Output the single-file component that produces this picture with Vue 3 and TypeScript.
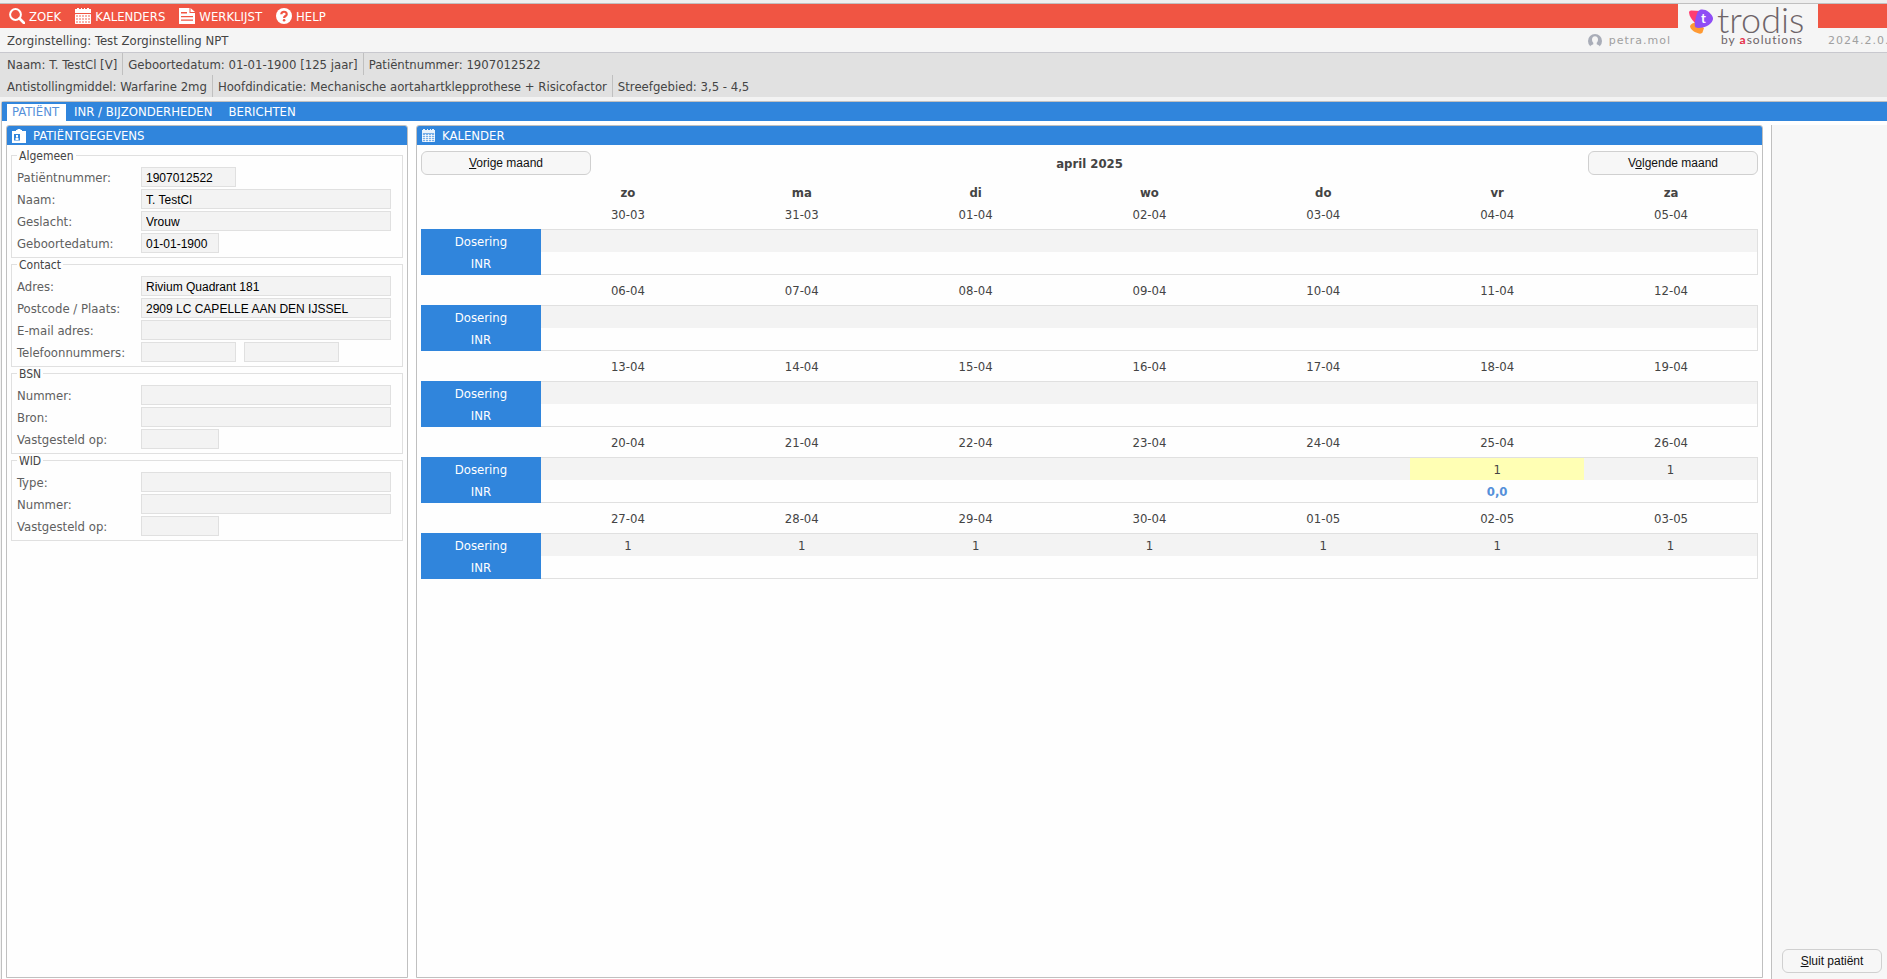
<script setup lang="ts">
interface Field { id: string; label: string; values: string[]; size: 'short' | 'medium' | 'full' }
interface Group { title: string; fields: Field[] }
interface Week { dates: string[]; doses: string[]; inr: string[]; today?: number }

const groups: Group[] = [
  {
    title: 'Algemeen',
    fields: [
      { id: 'nr', label: 'Patiëntnummer:', values: ['1907012522'], size: 'medium' },
      { id: 'naam', label: 'Naam:', values: ['T. TestCl'], size: 'full' },
      { id: 'geslacht', label: 'Geslacht:', values: ['Vrouw'], size: 'full' },
      { id: 'geboren', label: 'Geboortedatum:', values: ['01-01-1900'], size: 'short' },
    ],
  },
  {
    title: 'Contact',
    fields: [
      { id: 'adres', label: 'Adres:', values: ['Rivium Quadrant 181'], size: 'full' },
      { id: 'plaats', label: 'Postcode / Plaats:', values: ['2909 LC CAPELLE AAN DEN IJSSEL'], size: 'full' },
      { id: 'email', label: 'E-mail adres:', values: [''], size: 'full' },
      { id: 'telefoon', label: 'Telefoonnummers:', values: ['', ''], size: 'medium' },
    ],
  },
  {
    title: 'BSN',
    fields: [
      { id: 'bsn', label: 'Nummer:', values: [''], size: 'full' },
      { id: 'bron', label: 'Bron:', values: [''], size: 'full' },
      { id: 'bsn-datum', label: 'Vastgesteld op:', values: [''], size: 'short' },
    ],
  },
  {
    title: 'WID',
    fields: [
      { id: 'wid-type', label: 'Type:', values: [''], size: 'full' },
      { id: 'wid', label: 'Nummer:', values: [''], size: 'full' },
      { id: 'wid-datum', label: 'Vastgesteld op:', values: [''], size: 'short' },
    ],
  },
]

const days = ['zo', 'ma', 'di', 'wo', 'do', 'vr', 'za']
const none = ['', '', '', '', '', '', '']
const weeks: Week[] = [
  { dates: ['30-03', '31-03', '01-04', '02-04', '03-04', '04-04', '05-04'], doses: none, inr: none },
  { dates: ['06-04', '07-04', '08-04', '09-04', '10-04', '11-04', '12-04'], doses: none, inr: none },
  { dates: ['13-04', '14-04', '15-04', '16-04', '17-04', '18-04', '19-04'], doses: none, inr: none },
  {
    dates: ['20-04', '21-04', '22-04', '23-04', '24-04', '25-04', '26-04'],
    doses: ['', '', '', '', '', '1', '1'],
    inr: ['', '', '', '', '', '0,0', ''],
    today: 5,
  },
  {
    dates: ['27-04', '28-04', '29-04', '30-04', '01-05', '02-05', '03-05'],
    doses: ['1', '1', '1', '1', '1', '1', '1'],
    inr: none,
  },
]
</script>

<template>
  <div class="app">
    <header class="top">
      <nav class="menu">
        <a href="#">
          <svg width="16" height="16" viewBox="0 0 16 16"><circle cx="6.5" cy="6.5" r="5.4" fill="none" stroke="#fff" stroke-width="2" /><path d="M10.5 10.5L15 15" stroke="#fff" stroke-width="2.6" stroke-linecap="round" /></svg>
          <span>ZOEK</span>
        </a>
        <a href="#">
          <svg width="16" height="16" viewBox="0 0 16 16"><path fill="#fff" d="M0 1h2V0h2v1h2V0h1v1h2V0h1v1h2V0h2v1h2v4H0z" /><path fill="#fff" opacity=".55" d="M0 6h16v10H0z" /><path fill="none" stroke="#fff" d="M.5 6.500h15v9H.5zM0 9.500h16M0 12.500h16M3.500 6v10M6.500 6v10M9.500 6v10M12.500 6v10" /></svg>
          <span>KALENDERS</span>
        </a>
        <a href="#">
          <svg width="16" height="16" viewBox="0 0 16 16"><path fill="#fff" fill-rule="evenodd" d="M0 0h10.500v5H16v11H0zM2 4v1.500h6V4zM2 8v1.200h12V8zM2 11.500v1.200h12v-1.200z" /><path fill="#fff" d="M11.500 0L16 4h-4.500z" /></svg>
          <span>WERKLIJST</span>
        </a>
        <a href="#">
          <svg width="16" height="16" viewBox="0 0 16 16"><circle cx="8" cy="8" r="8" fill="#fff" /><path d="M5.300 6.200C5.300 2.900 10.700 3 10.700 6.200C10.700 8 8.100 8 8.100 9.900" fill="none" stroke="#f05543" stroke-width="2.200" /><circle cx="8.100" cy="12.200" r="1.300" fill="#f05543" /></svg>
          <span>HELP</span>
        </a>
      </nav>
      <div class="menu-end"></div>
      <div class="sub">
        <span>Zorginstelling: Test Zorginstelling NPT</span>
        <span class="user">
          <svg width="14" height="14" viewBox="0 0 14 14"><circle cx="7" cy="7" r="7" fill="#a9adb8" /><path fill="#f5f5f5" d="M7 2.200c2 0 3 1.500 3 3.300 0 1.500-.6 2.700-1.300 3.300v1.400c1.600.6 2.600 1.100 3.300 2L10 14H4l-2-1.800c.7-.9 1.700-1.400 3.300-2V8.800C4.600 8.200 4 7 4 5.500c0-1.800 1-3.300 3-3.300z" /></svg>
          <span>petra.mol</span>
        </span>
      </div>
      <div class="brand">
        <svg width="26" height="26" viewBox="0 0 26 26"><path fill="#ff3d71" d="M1 4.500C1 3.200 2 2.500 3.200 2.500L12 3 9 17C4 12 1.500 9 1 4.500z" /><path fill="#ff9a33" d="M2 18C4 14.500 8 14 10 16l6 4-1.500 4.500c-1 1.500-3 1.300-5 .6C6 24 2 21 2 18z" /><path fill="#8f4df5" d="M10 3.500C11.500 1 14.500 1 17.500 2c4 2 7.500 5.500 7.500 8.500 0 3-3 6.500-7 8-3 1.300-8.500 2-10.500.8C5.500 17.500 8 7 10 3.500z" /><text x="13" y="15" class="mark">t</text></svg>
        <div class="words">
          <span class="name">trodis</span>
          <span class="by">by <b>a</b>solutions</span>
        </div>
      </div>
      <span class="version">2024.2.0.0</span>
    </header>

    <section class="summary">
      <div><span>Naam: T. TestCl [V]</span><span>Geboortedatum: 01-01-1900 [125 jaar]</span><span>Patiëntnummer: 1907012522</span></div>
      <div><span>Antistollingmiddel: Warfarine 2mg</span><span>Hoofdindicatie: Mechanische aortahartklepprothese + Risicofactor</span><span>Streefgebied: 3,5 - 4,5</span></div>
    </section>

    <div class="frame">
      <nav class="tabs">
        <a href="#" class="active" aria-current="page">PATIËNT</a>
        <a href="#">INR / BIJZONDERHEDEN</a>
        <a href="#">BERICHTEN</a>
      </nav>
      <main class="body">
        <section class="panel patient">
          <h2>
            <svg width="14" height="14" viewBox="0 0 14 14"><path fill="#fff" fill-rule="evenodd" d="M0 2h4V1h1.500V0h3v1H10v1h4v12H0zM2 5v6.500h6V5z" /><path fill="#fff" d="M4 6h2v2.500H4zM3.500 9h3v2h-3z" /></svg>
            PATIËNTGEGEVENS
          </h2>
          <form class="form">
            <fieldset v-for="g in groups" :key="g.title">
              <legend>{{ g.title }}</legend>
              <div v-for="f in g.fields" :key="f.id" class="row">
                <label :for="f.id">{{ f.label }}</label>
                <div class="inputs">
                  <input v-for="(v, i) in f.values" :id="i ? f.id + i : f.id" :key="i" type="text" :value="v" :class="f.size" :aria-label="f.label" readonly />
                </div>
              </div>
            </fieldset>
          </form>
        </section>

        <section class="panel calendar">
          <h2>
            <svg width="13" height="13" viewBox="0 0 13 13"><path fill="#fff" opacity=".9" d="M0 1h1V0h2v1h2V0h1v1h2V0h1v1h1V0h2v1h1v3H0z" /><path fill="#fff" opacity=".35" d="M0 4h13v9H0z" /><path fill="none" stroke="#fff" opacity=".75" d="M.5 4v8.500h12V4M0 6.500h13M0 8.500h13M0 10.500h13M3.500 5v8M6.500 5v8M9.500 5v8" /></svg>
            KALENDER
          </h2>
          <div class="month">
            <button type="button"><span><u>V</u>orige maand</span></button>
            <strong>april 2025</strong>
            <button type="button"><span>V<u>o</u>lgende maand</span></button>
          </div>
          <table>
            <colgroup><col class="labels" /><col v-for="d in days" :key="d" /></colgroup>
            <thead>
              <tr><td></td><th v-for="d in days" :key="d" scope="col">{{ d }}</th></tr>
            </thead>
            <tbody v-for="w in weeks" :key="w.dates[0]">
              <tr class="dates"><td></td><td v-for="d in w.dates" :key="d">{{ d }}</td></tr>
              <tr class="dose"><th scope="row">Dosering</th><td v-for="(v, i) in w.doses" :key="i" :class="{ today: i === w.today }">{{ v }}</td></tr>
              <tr class="inr"><th scope="row">INR</th><td v-for="(v, i) in w.inr" :key="i">{{ v }}</td></tr>
            </tbody>
          </table>
        </section>

        <aside class="side">
          <button type="button"><span><u>S</u>luit patiënt</span></button>
        </aside>
      </main>
    </div>
  </div>
</template>

<style>
body { margin: 0; overflow: hidden; }
</style>

<style scoped>
.app {
  box-sizing: border-box;
  display: flex;
  flex-direction: column;
  height: 100vh;
  overflow: hidden;
  border-top: 3px solid #eee;
  background: #f3f3f3;
  color: #444;
  font: 13px/22px "DejaVu Sans Condensed", Tahoma, "Noto Sans", sans-serif;
}
a { color: inherit; text-decoration: none; }
svg { display: block; flex: none; }

.top {
  display: grid;
  grid-template-columns: 1fr 140px 69px;
  grid-template-rows: 24px 24px;
  flex: none;
  border-top: 1px solid #c0c0c0;
  border-bottom: 1px solid #c8c8ce;
  background: #f5f5f5;
}
.menu { display: flex; align-items: center; gap: 14px; padding-left: 9px; background: #f05543; color: #fff; }
.menu a { display: flex; align-items: center; gap: 4px; }
.menu span { padding-top: 1px; }
.menu-end { grid-column: 3; background: #f05543; }
.sub { grid-area: 2 / 1; display: flex; align-items: center; justify-content: space-between; padding: 1px 7px 0; }
.user { display: flex; align-items: center; gap: 7px; color: #a0a0a0; font: 11px/22px "DejaVu Sans", sans-serif; letter-spacing: 1px; }
.version { grid-area: 2 / 3; padding: 2px 0 0 10px; overflow: hidden; color: #a0a0a0; font: 11px/22px "DejaVu Sans", sans-serif; letter-spacing: 1px; white-space: nowrap; }
.brand { grid-area: 1 / 2 / 3 / 3; display: flex; align-items: flex-start; gap: 3px; padding: 4px 0 0 10px; background: #f5f5f5; color: #6e6468; font-family: Lato, sans-serif; }
.mark { fill: #fff; font: 700 13px Lato, sans-serif; }
.words { display: flex; flex-direction: column; gap: 3px; }
.name { font-size: 36px; line-height: 22px; font-weight: 300; }
.by { padding-left: 4px; font-size: 12px; line-height: 14px; letter-spacing: 1px; }
.by b { color: #e5304a; }

.summary { flex: none; background: #e1e1e1; margin-bottom: 4px; }
.summary div { display: flex; padding-left: 2px; }
.summary span { padding: 2px 5px 0; line-height: 20px; }
.summary span + span { border-left: 1px solid #c0c0c0; }

.frame { flex: 1; min-height: 0; display: flex; flex-direction: column; margin-left: 1px; border: solid #c0c0c0; border-width: 1px 0 0 1px; border-top-left-radius: 3px; background: #fff; }
.tabs { display: flex; flex: none; box-sizing: border-box; height: 19px; padding: 2px 5px 0; background: #3085dc; color: #fff; line-height: 15px; }
.tabs a { padding: 0 8px 2px; }
.tabs .active { padding: 0 7px 2px 5px; background: #fff; color: #5590da; }

.body { flex: 1; min-height: 0; display: flex; padding: 4px 0 0 4px; }
.panel { box-sizing: border-box; margin-bottom: 1px; border: 1px solid #c0c0c0; border-radius: 3px 3px 0 0; background: #fefefe; overflow: hidden; }
.panel h2 { display: flex; align-items: center; gap: 7px; height: 19px; margin: 0; padding-left: 5px; background: #3085dc; color: #fff; font-size: 13px; line-height: 19px; font-weight: 400; }
.patient { flex: none; width: 402px; margin-right: 8px; }
.calendar { flex: 1; margin-right: 8px; }

.form { padding: 4px; }
fieldset { min-width: 0; margin: 0; padding: 5px 0 4px 5px; border: 1px solid #e0e0e0; }
legend { box-sizing: border-box; height: 13px; margin: 0; padding: 1px 2px 0; font-size: 12px; line-height: 13px; }
.row { display: flex; height: 20px; color: #606060; }
.row + .row { margin-top: 2px; }
.row label { flex: none; width: 124px; padding-top: 1px; line-height: 20px; }
.inputs { display: flex; gap: 8px; }
input { box-sizing: border-box; height: 20px; margin: 0; padding: 1px 4px 0; border: 1px solid #e0e0e0; border-radius: 0; outline: 0; background: #f3f3f3; color: #000; font: 12px "Liberation Sans", Arial, sans-serif; }
.short { width: 78px; }
.medium { width: 95px; }
.full { width: 250px; }

.month { display: flex; align-items: center; justify-content: space-between; padding: 6px 4px; }
.month strong { padding-top: 2px; }
button { box-sizing: border-box; width: 170px; height: 24px; padding: 0; border: 1px solid #d0d0d0; border-radius: 6px; background: #f7f7f7; color: #111; font: 12px/22px "Liberation Sans", Arial, sans-serif; }
table { width: calc(100% - 8px); margin: 0 4px; table-layout: fixed; border-collapse: separate; border-spacing: 0; text-align: center; }
.labels { width: 120px; }
td, th { height: 20px; padding: 2px 0 0; line-height: 20px; }
.dates td { padding: 6px 0 4px; }
thead + tbody .dates td { padding-top: 2px; }
tbody th { background: #3085dc; color: #fff; font-weight: 400; }
.dose td { border-top: 1px solid #e0e0e0; background: #f3f3f3; }
.dose th { padding-top: 3px; }
.dose .today { background: #ffffb4; }
.inr td { border-bottom: 1px solid #e0e0e0; color: #5590da; font-weight: 700; }
.inr th { padding-bottom: 1px; }
.dose td:last-child, .inr td:last-child { border-right: 1px solid #e0e0e0; }

.side { display: flex; align-items: flex-end; flex: none; padding: 0 5px 6px 10px; border-left: 1px solid #c0c0c0; background: #f7f7f7; }
.side button { width: 100px; }
</style>
